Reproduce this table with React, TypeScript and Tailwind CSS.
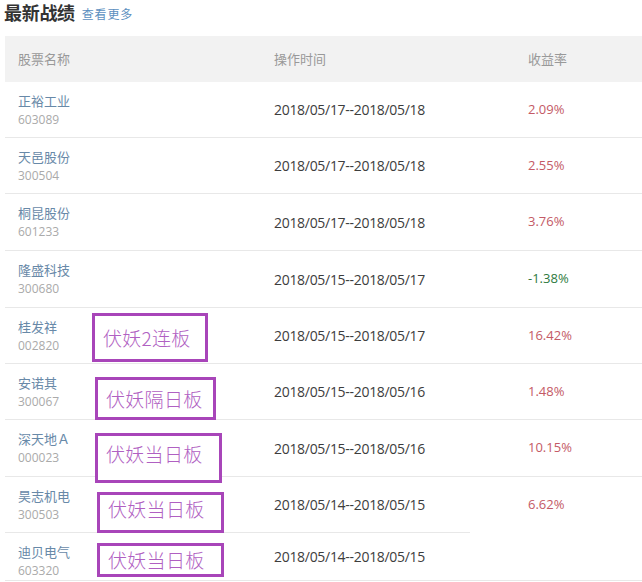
import React from "react";

type Row = { name: string; code: string; date: string; rate: string; up: boolean; h: string; line: string; tag?: { text: string; cls: string } };

const rows: Row[] = [
  { name: "正裕工业", code: "603089", date: "2018/05/17--2018/05/18", rate: "2.09%", up: true, h: "h-[55px]", line: "w-full" },
  { name: "天邑股份", code: "300504", date: "2018/05/17--2018/05/18", rate: "2.55%", up: true, h: "h-[55px]", line: "w-full" },
  { name: "桐昆股份", code: "601233", date: "2018/05/17--2018/05/18", rate: "3.76%", up: true, h: "h-[56px]", line: "w-full" },
  { name: "隆盛科技", code: "300680", date: "2018/05/15--2018/05/17", rate: "-1.38%", up: false, h: "h-[56px]", line: "w-full" },
  { name: "桂发祥", code: "002820", date: "2018/05/15--2018/05/17", rate: "16.42%", up: true, h: "h-[55px]", line: "w-full", tag: { text: "伏妖2连板", cls: "left-[87px] top-[5px] w-[116px] h-[49px]" } },
  { name: "安诺其", code: "300067", date: "2018/05/15--2018/05/16", rate: "1.48%", up: true, h: "h-[55px]", line: "w-full", tag: { text: "伏妖隔日板", cls: "left-[90px] top-[13px] w-[121px] h-[43px]" } },
  { name: "深天地Ａ", code: "000023", date: "2018/05/15--2018/05/16", rate: "10.15%", up: true, h: "h-[56px]", line: "w-full", tag: { text: "伏妖当日板", cls: "left-[90px] top-[13px] w-[127px] h-[50px] items-start pt-[6px]" } },
  { name: "昊志机电", code: "300503", date: "2018/05/14--2018/05/15", rate: "6.62%", up: true, h: "h-[55px]", line: "w-[465px]", tag: { text: "伏妖当日板", cls: "left-[92px] top-[15px] w-[127px] h-[41px] items-start pt-[2px]" } },
  { name: "迪贝电气", code: "603320", date: "2018/05/14--2018/05/15", rate: "", up: true, h: "h-[47px]", line: "w-full bg-[#e6eef6]", tag: { text: "伏妖当日板", cls: "left-[92px] top-[10px] w-[127px] h-[34px] items-start pt-[2px]" } },
];

const cjk = { fontFamily: '"Noto Sans CJK SC", sans-serif' } as React.CSSProperties;
const font = { fontFamily: '"Open Sans", "Noto Sans CJK SC", sans-serif' } as React.CSSProperties;

export default function App() {
  return (
    <div className="w-[642px] h-[582px] overflow-hidden bg-white" style={font}>
      <div className="flex items-end h-[36px] pl-[4px] pb-[14px]">
        <span className="text-[18px] font-bold text-[#333] leading-[20px] tracking-[-0.3px]" style={cjk}>最新战绩</span>
        <span className="ml-[7px] text-[12px] text-[#5b8fc0] leading-[16px] tracking-[0.8px]" style={cjk}>查看更多</span>
      </div>
      <div className="ml-[5px]">
        <div className="flex items-center h-[46px] bg-[#f2f2f2] text-[13px] text-[#999]" style={cjk}>
          <div className="w-[269px] shrink-0 pl-[13px]">股票名称</div>
          <div className="w-[254px] shrink-0">操作时间</div>
          <div>收益率</div>
        </div>
        {rows.map((r, i) => (
          <div key={i}>
            <div className={`relative flex ${r.h}`}>
              <div className="w-[269px] shrink-0 pl-[13px] pt-[9px] flex flex-col">
                <span className="text-[13px] leading-[20px] text-[#6889a8]" style={cjk}>{r.name}</span>
                <span className="text-[12px] leading-[18px] text-[#aaa]">{r.code}</span>
              </div>
              <div className="w-[254px] shrink-0 flex items-center text-[14px] text-[#3d3d3d] tracking-[-0.3px]">{r.date}</div>
              <div className={`flex items-center text-[13px] ${r.up ? "text-[#c45a66]" : "text-[#2e7a40]"}`}>{r.rate}</div>
              {r.tag && (
                <div className={`absolute flex items-center pl-[8px] border-[3px] border-[#a845b9] bg-white ${r.tag.cls}`}>
                  <span className="text-[19px] leading-[24px] font-light text-[#b060c2] tracking-[0.3px]" style={cjk}>{r.tag.text}</span>
                </div>
              )}
            </div>
            <div className={`h-px bg-[#e8e8e8] ${r.line}`} />
          </div>
        ))}
      </div>
    </div>
  );
}
